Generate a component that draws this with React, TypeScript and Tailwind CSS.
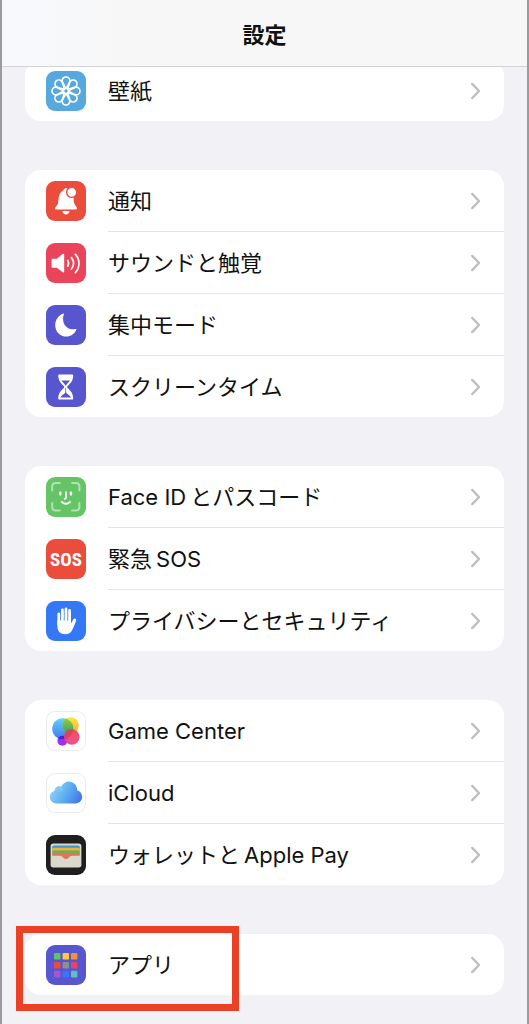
import { FC, ReactNode } from "react";

const PETALS = [0, 45, 90, 135, 180, 225, 270, 315];

const APP_TILES = [
  { x: 8, y: 8, fill: "#62c466" },
  { x: 16.6, y: 8, fill: "#ffc93c" },
  { x: 25, y: 8, fill: "#f0923a" },
  { x: 8, y: 17, fill: "#eb4b3d" },
  { x: 16.6, y: 17, fill: "#8e8e93" },
  { x: 25, y: 17, fill: "#ea4360" },
  { x: 8, y: 25.8, fill: "#a357d7" },
  { x: 16.6, y: 25.8, fill: "#3478f6" },
  { x: 25, y: 25.8, fill: "#58c2bd" },
];

const WallpaperIcon: FC = () => (
  <svg viewBox="0 0 40 40" className="size-full" fill="none" stroke="#fff" strokeWidth="1.6">
    {PETALS.map((angle) => (
      <path
        key={angle}
        d="M18.4 19 C18.4 16.4 16.1 12.6 16.1 9.9 A3.9 3.9 0 0 1 23.9 9.9 C23.9 12.6 21.6 16.4 21.6 19"
        transform={`rotate(${angle} 20 20)`}
      />
    ))}
    <circle cx="20" cy="20" r="1.2" fill="#58a8e0" stroke="none" />
  </svg>
);

const BellIcon: FC = () => (
  <svg viewBox="0 0 40 40" className="size-full" fill="#fff">
    <path d="M9.2 27.2 C9.2 25.6 11.8 24.6 12.2 21.5 C12.7 17.4 12.6 12.8 15.8 10.6 C16.8 9.9 17.4 9.6 17.8 8.6 C18.5 6.8 21.7 6.8 22.4 8.6 L27.6 15.6 C27.7 18 27.6 20 28 21.8 C28.6 24.6 31 25.6 31 27.2 C31 28 30.4 28.4 29.6 28.4 H10.6 C9.8 28.4 9.2 28 9.2 27.2 Z" />
    <path d="M16.4 30 H23.6 C23.2 32.2 21.9 33.4 20 33.4 C18.1 33.4 16.8 32.2 16.4 30 Z" />
    <circle cx="25.7" cy="11.4" r="5" stroke="#eb4d3d" strokeWidth="1.4" />
  </svg>
);

const SpeakerIcon: FC = () => (
  <svg viewBox="0 0 40 40" className="size-full" fill="none" stroke="#fff" strokeWidth="1.7" strokeLinecap="round">
    <path
      fill="#fff"
      stroke="none"
      d="M7 15.8 H10.8 L16.6 11.1 C17.4 10.5 18.2 10.9 18.2 11.8 V28.4 C18.2 29.4 17.3 29.8 16.5 29.1 L10.8 24.8 H7 C6.1 24.8 5.6 24.3 5.6 23.4 V17.2 C5.6 16.3 6.1 15.8 7 15.8 Z"
    />
    <path d="M21.7 17.3 C22.8 19.2 22.8 21.4 21.7 23.3" />
    <path d="M25.4 14.6 C28.1 18 28.1 22.6 25.4 26.1" />
    <path d="M29.4 11.3 C34.1 16.3 34.1 24.5 29.4 29.6" />
  </svg>
);

const MoonIcon: FC = () => (
  <svg viewBox="0 0 40 40" className="size-full" fill="#fff">
    <path d="M16.8 8.8 C17.4 8.4 18.1 8.7 17.8 9.5 C14.9 17.9 20.7 26.2 29.4 24 C30.3 23.7 30.7 24.3 30.2 25.1 C28.4 29 24.8 31.6 20.5 31.6 C14.2 31.6 9.2 26.6 9.2 20.2 C9.2 15 12.4 10.6 16.8 8.8 Z" />
  </svg>
);

const HourglassIcon: FC = () => (
  <svg viewBox="0 0 40 40" className="size-full">
    <path
      fill="#fff"
      d="M13.4 7.4 H26 C26.9 7.4 27.3 8 27.2 8.9 C27 14 24.2 16.4 21.8 18.7 C21 19.5 21 20.5 21.8 21.3 C24.2 23.6 27 26 27.2 31.1 C27.3 32.1 26.8 32.6 26 32.6 H13.4 C12.6 32.6 12.2 32.1 12.2 31.1 C12.5 26 15.3 23.6 17.6 21.3 C18.4 20.5 18.4 19.5 17.6 18.7 C15.3 16.4 12.5 14 12.2 8.9 C12.2 8 12.6 7.4 13.4 7.4 Z"
    />
    <path fill="#5756ce" d="M15.4 13.5 H24 C23 15.4 20.5 16.6 20.1 18.4 H19.3 C18.9 16.6 16.4 15.4 15.4 13.5 Z" />
    <path fill="#5756ce" d="M19.3 21 H20.1 V25.4 C21.2 27.3 24 28 25.1 30.5 H14.3 C15.4 28 18.2 27.3 19.3 25.4 Z" />
  </svg>
);

const FaceIdIcon: FC = () => (
  <svg viewBox="0 0 40 40" className="size-full" fill="none" stroke="#fff" strokeWidth="2" strokeLinecap="round">
    <path
      opacity="0.5"
      d="M6.2 13.6 V9.4 Q6.2 6 9.6 6 H13.8 M26 6 H30 Q33.4 6 33.4 9.4 V13.6 M33.4 26 V30 Q33.4 33.4 30 33.4 H26 M13.8 33.4 H9.6 Q6.2 33.4 6.2 30 V26"
    />
    <path d="M14.3 15.6 V17.2 M25 15.6 V17.2" strokeWidth="2.4" />
    <path d="M20 15 V20.4 Q20 21.8 18.6 21.8" strokeWidth="1.7" />
    <path d="M15.8 25 Q19.9 28.6 24 25" />
  </svg>
);

const HandIcon: FC = () => (
  <svg viewBox="0 0 40 40" className="size-full" fill="none" stroke="#fff" strokeLinecap="round">
    <path strokeWidth="2.8" d="M12.8 12.8 V23 M16.4 9 V22 M20 8 V22 M23.6 9.4 V22" />
    <path
      fill="#fff"
      stroke="none"
      d="M11.4 19.5 H25 V22.4 L27.2 18.4 C28 16.8 30.6 17.5 30.1 19.4 C29.2 22.7 27.8 25.4 26.6 28.2 C25.2 31.5 22.8 33.2 19.4 33.2 C14.1 33.2 11.4 30 11.4 25.2 Z"
    />
  </svg>
);

const GameCenterIcon: FC = () => (
  <svg viewBox="0 0 40 40" className="size-full">
    <defs>
      <linearGradient id="gc-blue" x1="0" y1="0" x2="0" y2="1">
        <stop offset="0" stopColor="#62d2fb" />
        <stop offset="1" stopColor="#3f78ee" />
      </linearGradient>
      <linearGradient id="gc-yellow" x1="0" y1="0" x2="0" y2="1">
        <stop offset="0" stopColor="#fbea3d" />
        <stop offset="1" stopColor="#f5a83b" />
      </linearGradient>
      <linearGradient id="gc-green" x1="0" y1="0" x2="0" y2="1">
        <stop offset="0" stopColor="#8fd14c" />
        <stop offset="1" stopColor="#3f9d5a" />
      </linearGradient>
      <linearGradient id="gc-pink" x1="0" y1="0" x2="0" y2="1">
        <stop offset="0" stopColor="#f0454c" />
        <stop offset="1" stopColor="#f2418e" />
      </linearGradient>
      <clipPath id="gc-clip">
        <circle cx="16.8" cy="17.8" r="10.6" />
      </clipPath>
    </defs>
    <circle cx="16.4" cy="29.8" r="5" fill="#a02ff5" />
    <circle cx="16.8" cy="17.8" r="10.6" fill="url(#gc-blue)" />
    <circle cx="16.4" cy="29.8" r="5" fill="#4b22d6" clipPath="url(#gc-clip)" />
    <circle cx="24.6" cy="14.4" r="8.2" fill="url(#gc-yellow)" />
    <circle cx="24.6" cy="14.4" r="8.2" fill="url(#gc-green)" clipPath="url(#gc-clip)" />
    <circle cx="25.8" cy="26" r="7.8" fill="url(#gc-pink)" opacity="0.94" />
    <circle cx="25.8" cy="26" r="7.8" fill="#c9395c" opacity="0.4" clipPath="url(#gc-clip)" />
  </svg>
);

const CloudIcon: FC = () => (
  <svg viewBox="0 0 40 40" className="size-full">
    <defs>
      <linearGradient id="cloud" x1="0" y1="0.3" x2="1" y2="0.7">
        <stop offset="0" stopColor="#93d6f8" />
        <stop offset="0.5" stopColor="#5fb0f2" />
        <stop offset="1" stopColor="#4377e8" />
      </linearGradient>
    </defs>
    <path
      fill="url(#cloud)"
      d="M10.4 30.4 C6.6 30.4 3.8 27.6 3.8 24 C3.8 21 5.8 18.6 8.6 17.8 C8.6 14.4 12.2 12.4 15.2 13.8 C16.8 10.4 19.6 8.4 22.8 8.4 C27.6 8.4 31.2 12.2 31.3 17.4 C34.2 18 36.2 20.8 36.2 23.8 C36.2 27.6 33.2 30.4 29.6 30.4 Z"
    />
    <path fill="#8fd0f7" opacity="0.5" d="M8.6 17.8 C8.6 13.8 13.6 12 16.4 15.2 C17.2 16.4 17.6 17.8 17.2 19.4 C15 16.8 11.6 16.6 8.6 17.8 Z" />
  </svg>
);

const WalletIcon: FC = () => (
  <svg viewBox="0 0 40 40" className="size-full">
    <rect x="4.6" y="8.6" width="30.8" height="23.8" rx="2.6" fill="#dad7cd" />
    <path fill="#4596cf" d="M6.2 14 V12 Q6.2 10.4 7.8 10.4 H32.2 Q33.8 10.4 33.8 12 V14 Z" />
    <path fill="#f0b13c" d="M6.2 16 V14.4 Q6.2 12.8 7.8 12.8 H32.2 Q33.8 12.8 33.8 14.4 V16 Z" />
    <rect x="6.2" y="15.4" width="27.6" height="4" fill="#72ad51" />
    <path fill="#e9705f" d="M6.2 18.4 H33.8 V20.8 H26 C24.4 20.8 24 21.6 23 22.6 C21 24.6 19 24.6 17 22.6 C16 21.6 15.6 20.8 14 20.8 H6.2 Z" />
  </svg>
);

const AppsIcon: FC = () => (
  <svg viewBox="0 0 40 40" className="size-full">
    {APP_TILES.map((tile) => (
      <rect key={tile.fill} x={tile.x} y={tile.y} width="6.4" height="6.6" rx="1.2" fill={tile.fill} />
    ))}
  </svg>
);

const Chevron: FC = () => (
  <svg viewBox="0 0 12 18" className="mr-[22px] h-[18px] w-3 shrink-0" fill="none" stroke="#bfbfc1" strokeWidth="2.4">
    <path d="M2.2 1.9 L9 9 L2.2 16.1" strokeLinecap="round" strokeLinejoin="round" />
  </svg>
);

type Item = { id: string; label: ReactNode; icon: ReactNode; tile: string };

const GROUPS: Item[][] = [
  [{ id: "wallpaper", label: "壁紙", icon: <WallpaperIcon />, tile: "bg-[#58a8e0]" }],
  [
    { id: "notifications", label: "通知", icon: <BellIcon />, tile: "bg-[#eb4d3d]" },
    { id: "sounds", label: "サウンドと触覚", icon: <SpeakerIcon />, tile: "bg-[#ea445a]" },
    { id: "focus", label: "集中モード", icon: <MoonIcon />, tile: "bg-[#5756ce]" },
    { id: "screen-time", label: "スクリーンタイム", icon: <HourglassIcon />, tile: "bg-[#5756ce]" },
  ],
  [
    {
      id: "face-id",
      label: (
        <>
          <span className="mr-1">Face ID</span>とパスコード
        </>
      ),
      icon: <FaceIdIcon />,
      tile: "bg-[#65c466]",
    },
    {
      id: "sos",
      label: (
        <>
          <span className="mr-1">緊急</span>SOS
        </>
      ),
      icon: <span className="font-['Roboto_Condensed',Roboto,sans-serif] text-[19px] font-bold text-white">SOS</span>,
      tile: "bg-[#eb4d3d]",
    },
    { id: "privacy", label: "プライバシーとセキュリティ", icon: <HandIcon />, tile: "bg-[#3478f6]" },
  ],
  [
    { id: "game-center", label: "Game Center", icon: <GameCenterIcon />, tile: "bg-white ring-1 ring-inset ring-[#ebebed]" },
    { id: "icloud", label: "iCloud", icon: <CloudIcon />, tile: "bg-white ring-1 ring-inset ring-[#ebebed]" },
    {
      id: "wallet",
      label: (
        <>
          <span className="mr-1">ウォレットと</span>Apple Pay
        </>
      ),
      icon: <WalletIcon />,
      tile: "bg-[#1f1f20]",
    },
  ],
  [{ id: "apps", label: "アプリ", icon: <AppsIcon />, tile: "bg-[#5756ce]" }],
];

const Row: FC<{ item: Item }> = ({ item }) => (
  <li className="group">
    <a href={`#${item.id}`} className="flex items-center gap-[22px] pl-[21px]">
      <span className={`flex size-10 shrink-0 items-center justify-center overflow-hidden rounded-[9px] ${item.tile}`}>
        {item.icon}
      </span>
      <span className="flex min-w-0 flex-1 items-center border-b border-[#e4e4e6] group-last:border-b-0">
        <span className="flex h-[61px] flex-1 items-center whitespace-nowrap">{item.label}</span>
        <Chevron />
      </span>
    </a>
  </li>
);

const App: FC = () => {
  return (
    <div className="min-h-screen border-x-2 border-[#9b9b9d] bg-[#f2f1f6] font-[Inter,'Noto_Sans_CJK_JP',sans-serif] text-[22px] leading-none text-[#111]">
      <header className="sticky top-0 z-10 flex h-[67px] items-center justify-center border-b border-[#d3d3d5] bg-[#f7f7f7] bg-linear-to-r from-[#f7f9fc] to-[#f7f7f7] to-30% pt-1">
        <h1 className="font-bold">設定</h1>
      </header>

      <main className="-mt-[7px] flex flex-col gap-[49px] px-[23px] pb-7">
        {GROUPS.map((group) => (
          <section key={group[0].id} className="relative">
            <ul className="rounded-2xl bg-white">
              {group.map((item) => (
                <Row key={item.id} item={item} />
              ))}
            </ul>
            {group[0].id === "apps" && (
              <div className="pointer-events-none absolute -top-2 -left-[9px] h-[85px] w-[223px] border-[7px] border-[#ec4026]" />
            )}
          </section>
        ))}
      </main>
    </div>
  );
};

export default App;
